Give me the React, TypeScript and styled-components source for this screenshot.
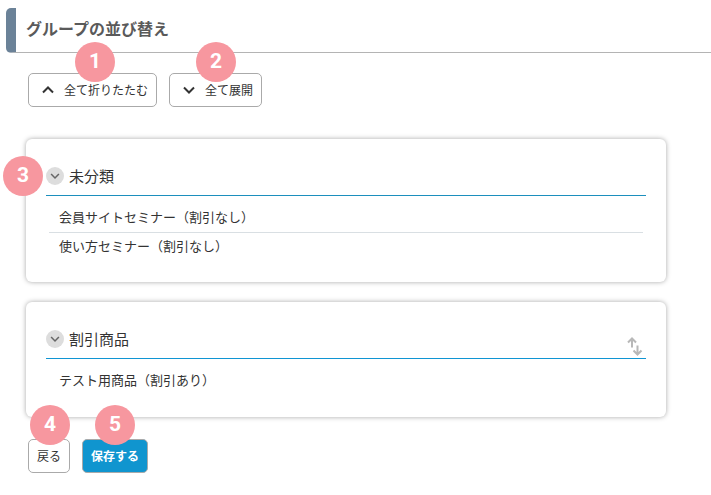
import React from "react";
import styled, { createGlobalStyle } from "styled-components";

const GlobalStyle = createGlobalStyle`
  *, *::before, *::after { box-sizing: border-box; }
  body {
    margin: 0;
    background: #fff;
    color: #333;
    font-family: "Noto Sans CJK JP", sans-serif;
    font-size: 13px;
  }
  h1, h2, ul { margin: 0; padding: 0; }
  button { font-family: inherit; cursor: pointer; }
`;

const Page = styled.main`
  padding: 8px 0 20px 6px;
`;

const Title = styled.h1`
  height: 45px;
  padding-left: 10px;
  border-left: 10px solid #6b8298;
  border-bottom: 1px solid #b4b4b4;
  border-radius: 5px 0 0 5px;
  color: #5a5a5a;
  font-size: 16px;
  font-weight: 700;
  line-height: 40px;
`;

const Actions = styled.div`
  display: flex;
  gap: 12px;
  padding-left: 22px;
`;

const Toolbar = styled(Actions)`
  margin: 20px 0 32px;
`;

const Anchor = styled.div`
  position: relative;
`;

const Badge = styled.span<{ $left: number; $top: number }>`
  position: absolute;
  left: ${(p) => p.$left}px;
  top: ${(p) => p.$top}px;
  width: 40px;
  height: 40px;
  border-radius: 50%;
  background: #f7979f;
  color: #fff;
  font-family: Roboto, sans-serif;
  font-size: 21px;
  font-weight: 700;
  line-height: 38px;
  text-align: center;
  pointer-events: none;
`;

const Button = styled.button<{ $primary?: boolean }>`
  display: flex;
  align-items: center;
  gap: 8px;
  height: 34px;
  padding: 0 8px;
  border: 1px solid #aaa;
  border-radius: 5px;
  background: ${(p) => (p.$primary ? "#1095cf" : "#fff")};
  color: ${(p) => (p.$primary ? "#fff" : "#333")};
  font-size: 12px;
  font-weight: ${(p) => (p.$primary ? 700 : 400)};
  line-height: 18px;
`;

const IconButton = styled(Button)`
  gap: 7px;
  padding-left: 10px;
`;

const Groups = styled.div`
  display: grid;
  gap: 20px;
  margin: 0 45px 22px 20px;
`;

const Card = styled.section`
  position: relative;
  padding: 20px;
  border-radius: 6px;
  background: #fff;
  box-shadow: 0 0 5px rgba(0, 0, 0, 0.35);
`;

const CardHeader = styled.header<{ $line: string }>`
  display: flex;
  align-items: center;
  gap: 5px;
  height: 37px;
  padding-bottom: 2px;
  border-bottom: 1px solid ${(p) => p.$line};
`;

const Toggle = styled.button`
  display: flex;
  align-items: center;
  justify-content: center;
  width: 18px;
  height: 18px;
  padding: 0;
  border: 0;
  border-radius: 50%;
  background: #ddd;
  color: #666;
`;

const GroupName = styled.h2`
  flex: 1;
  font-size: 15px;
  font-weight: 400;
  line-height: 24px;
`;

const SortHandle = styled.button`
  align-self: flex-end;
  display: flex;
  padding: 0 3px 0 0;
  border: 0;
  background: none;
  color: #b8b8b8;
`;

const Items = styled.ul`
  min-height: 38px;
  padding: 8px 3px 0;
  list-style: none;
`;

const Item = styled.li`
  padding: 3px 10px 5px;
  border-bottom: 1px solid #d9dfe3;
  line-height: 20px;
  &:last-child { border-color: transparent; }
`;

function Chevron({ up, size }: { up?: boolean; size: number }) {
  return (
    <svg width={size} height={size} viewBox="0 0 18 18" fill="none" stroke="currentColor" strokeWidth="2" aria-hidden="true">
      <path d={up ? "M4 11.5L9 6.5L14 11.5" : "M4 6.5L9 11.5L14 6.5"} />
    </svg>
  );
}

function SortIcon() {
  return (
    <svg width="16" height="20" viewBox="0 0 16 20" fill="none" stroke="currentColor" strokeWidth="2" aria-hidden="true">
      <path d="M5 11.5V3M1 6.5L5 2.5L9 6.5M10.5 9.5V18M6.5 14.5L10.5 18.5L14.5 14.5" />
    </svg>
  );
}

type GroupProps = { name: string; items: string[]; line: string; step?: number; sortable?: boolean };

function Group({ name, items, line, step, sortable }: GroupProps) {
  return (
    <Card>
      <CardHeader $line={line}>
        <Toggle type="button" aria-label={`${name}を開閉`}>
          <Chevron size={14} />
        </Toggle>
        <GroupName>{name}</GroupName>
        {sortable && (
          <SortHandle type="button" aria-label={`${name}を並び替え`}>
            <SortIcon />
          </SortHandle>
        )}
      </CardHeader>
      <Items>
        {items.map((item) => (
          <Item key={item}>{item}</Item>
        ))}
      </Items>
      {step && <Badge $left={-23} $top={17}>{step}</Badge>}
    </Card>
  );
}

export default function App() {
  return (
    <>
      <GlobalStyle />
      <Page>
        <Title>グループの並び替え</Title>
        <Toolbar>
          <Anchor>
            <IconButton type="button"><Chevron up size={18} />全て折りたたむ</IconButton>
            <Badge $left={47} $top={-31}>1</Badge>
          </Anchor>
          <Anchor>
            <IconButton type="button"><Chevron size={18} />全て展開</IconButton>
            <Badge $left={27} $top={-31}>2</Badge>
          </Anchor>
        </Toolbar>
        <Groups>
          <Group
            name="未分類"
            items={["会員サイトセミナー（割引なし）", "使い方セミナー（割引なし）"]}
            line="#1c8fbd"
            step={3}
          />
          <Group name="割引商品" items={["テスト用商品（割引あり）"]} line="#1095d3" sortable />
        </Groups>
        <Actions>
          <Anchor>
            <Button type="button">戻る</Button>
            <Badge $left={2} $top={-34}>4</Badge>
          </Anchor>
          <Anchor>
            <Button type="button" $primary>保存する</Button>
            <Badge $left={13} $top={-34}>5</Badge>
          </Anchor>
        </Actions>
      </Page>
    </>
  );
}
